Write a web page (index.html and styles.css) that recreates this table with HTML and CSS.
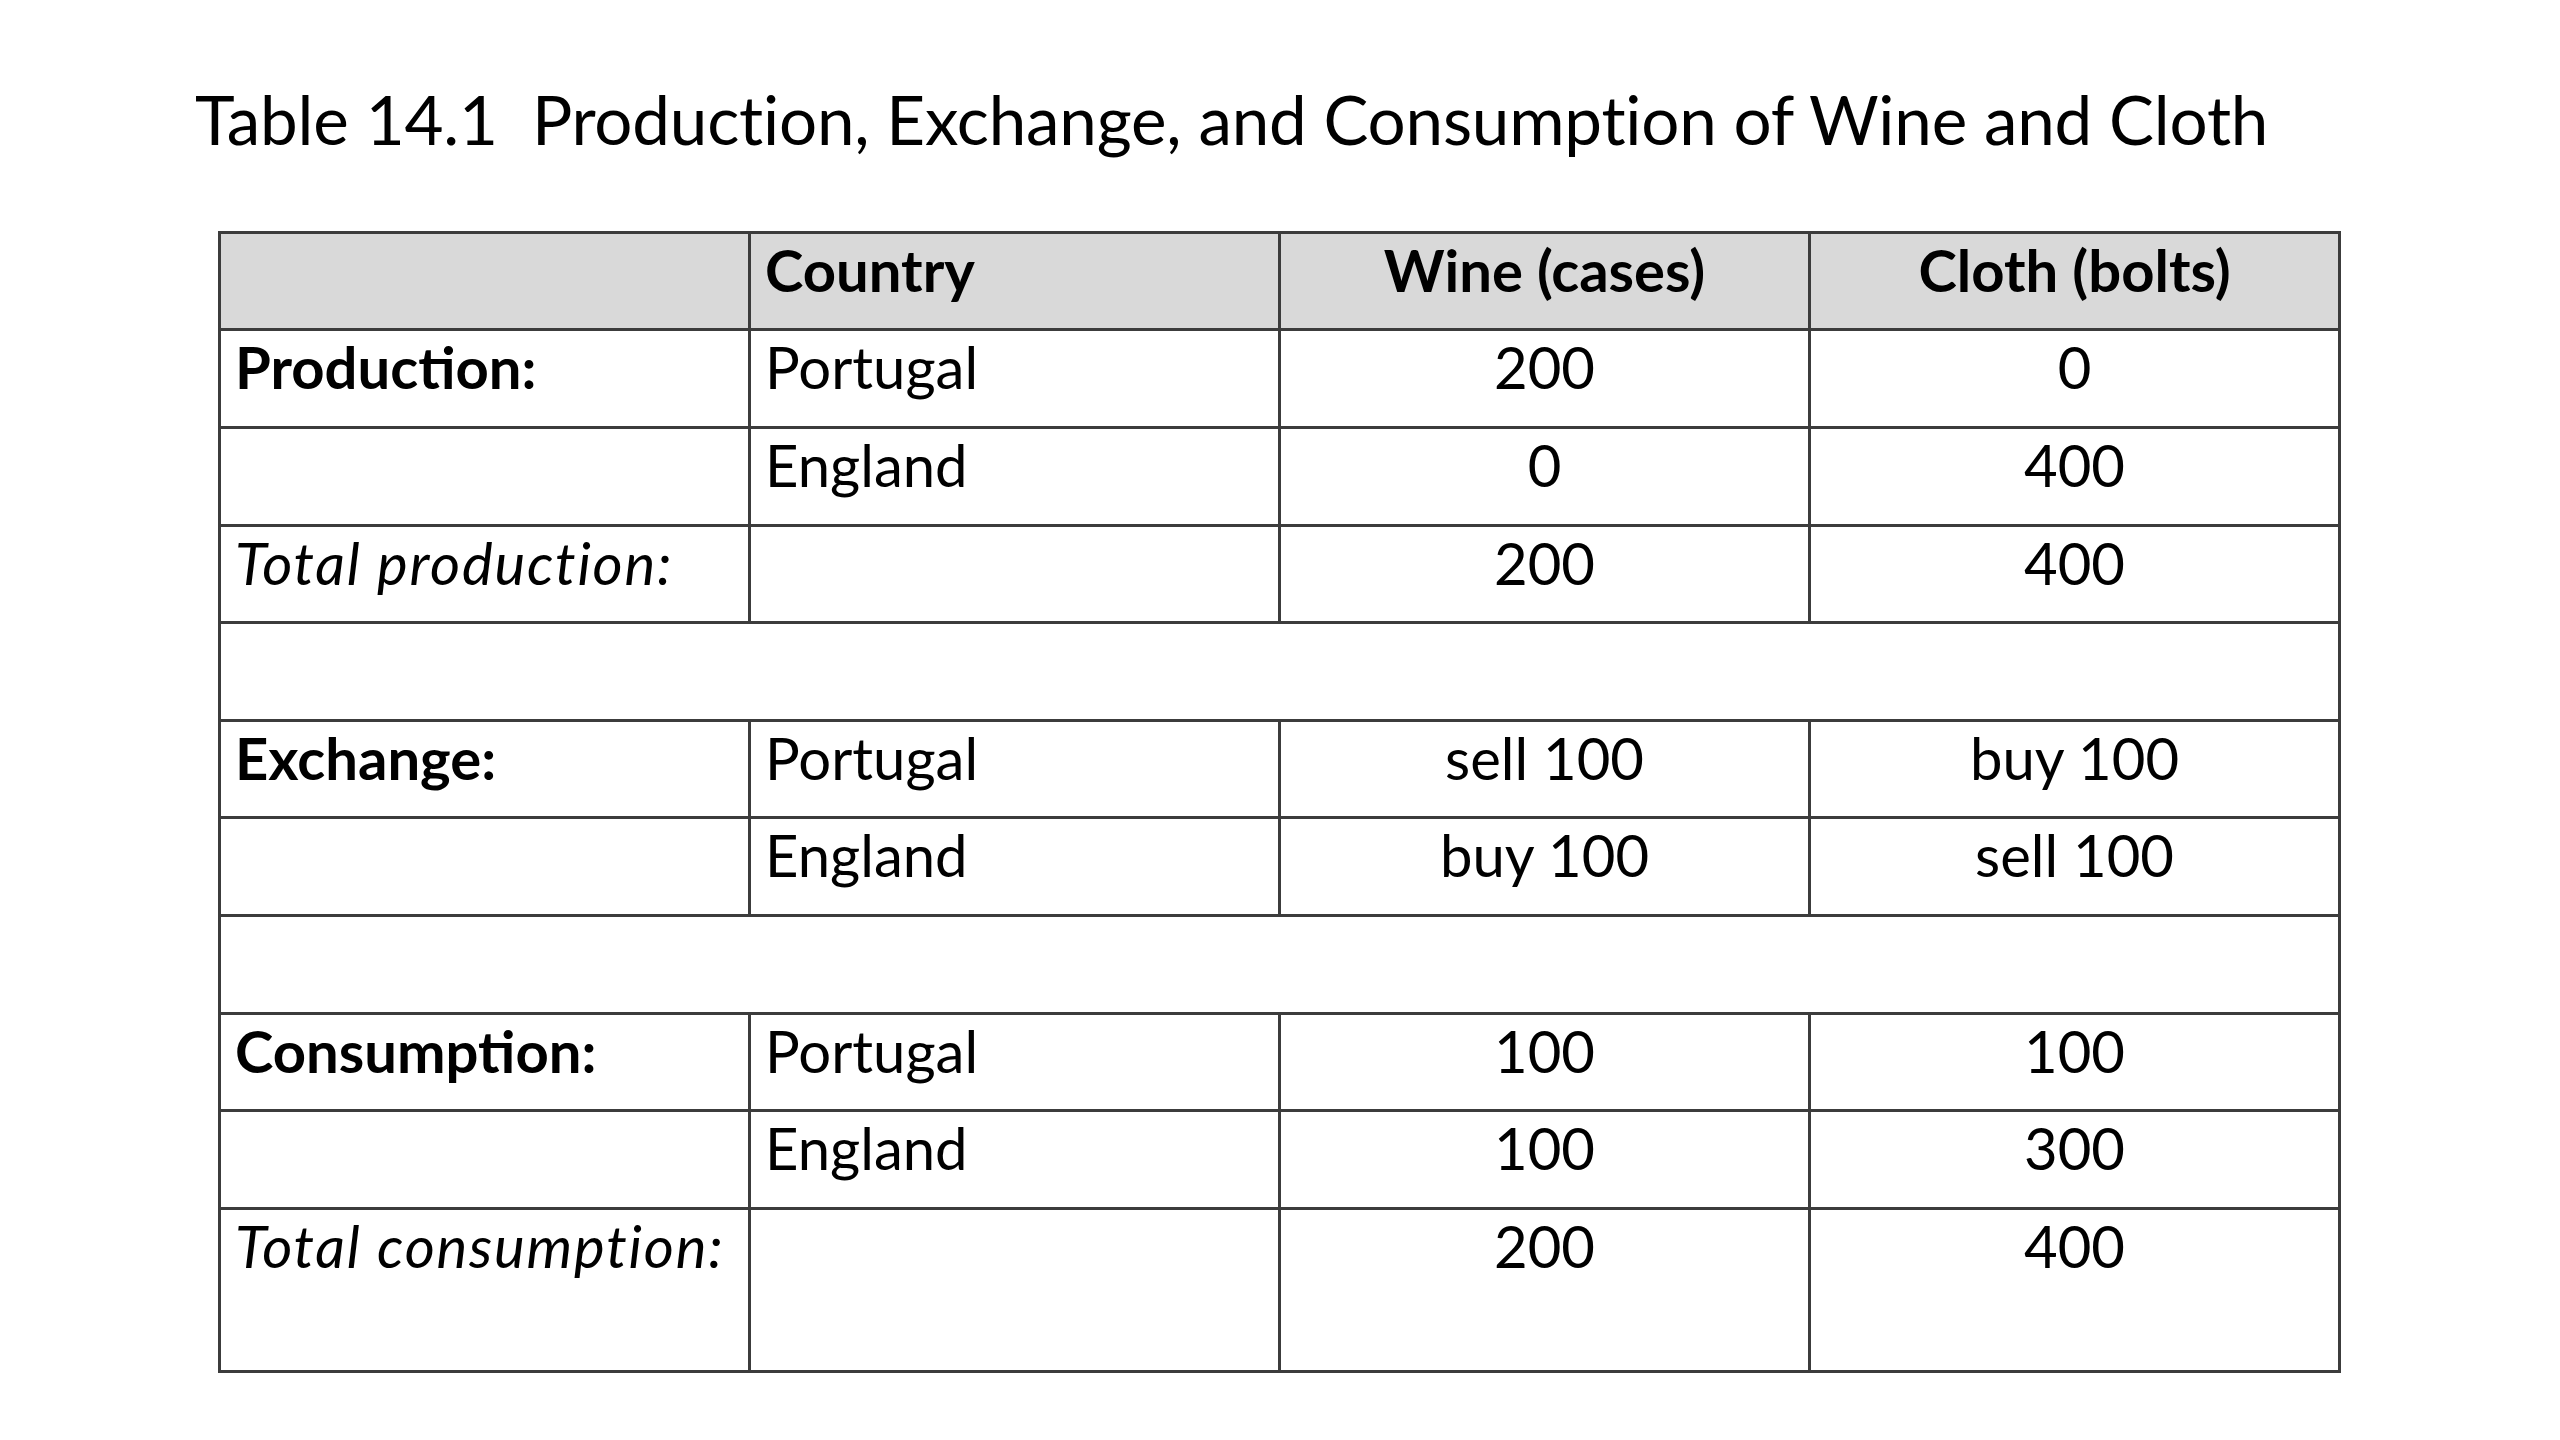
FILE: index.html
```html
<!DOCTYPE html>
<html lang="en">
<head>
<meta charset="utf-8">
<title>Table 14.1</title>
<link rel="stylesheet" href="styles.css">
</head>
<body>
<div class="page">
  <h1 class="title">Table 14.1&nbsp; Production, Exchange, and Consumption of Wine and Cloth</h1>
  <table class="data">
    <colgroup>
      <col class="c"><col class="c"><col class="c"><col class="c">
    </colgroup>
    <thead>
      <tr class="row head">
        <th class="lbl"></th>
        <th class="lbl">Country</th>
        <th class="num">Wine (cases)</th>
        <th class="num">Cloth (bolts)</th>
      </tr>
    </thead>
    <tbody>
      <tr class="row">
        <td class="lbl sect">Production:</td>
        <td class="lbl">Portugal</td>
        <td class="num">200</td>
        <td class="num">0</td>
      </tr>
      <tr class="row">
        <td class="lbl"></td>
        <td class="lbl">England</td>
        <td class="num">0</td>
        <td class="num">400</td>
      </tr>
      <tr class="row">
        <td class="lbl total">Total production:</td>
        <td class="lbl"></td>
        <td class="num">200</td>
        <td class="num">400</td>
      </tr>
      <tr class="row"><td class="blank" colspan="4"></td></tr>
      <tr class="row">
        <td class="lbl sect">Exchange:</td>
        <td class="lbl">Portugal</td>
        <td class="num">sell 100</td>
        <td class="num">buy 100</td>
      </tr>
      <tr class="row">
        <td class="lbl"></td>
        <td class="lbl">England</td>
        <td class="num">buy 100</td>
        <td class="num">sell 100</td>
      </tr>
      <tr class="row"><td class="blank" colspan="4"></td></tr>
      <tr class="row">
        <td class="lbl sect">Consumption:</td>
        <td class="lbl">Portugal</td>
        <td class="num">100</td>
        <td class="num">100</td>
      </tr>
      <tr class="row">
        <td class="lbl"></td>
        <td class="lbl">England</td>
        <td class="num">100</td>
        <td class="num">300</td>
      </tr>
      <tr class="row last">
        <td class="lbl total">Total consumption:</td>
        <td class="lbl"></td>
        <td class="num">200</td>
        <td class="num">400</td>
      </tr>
    </tbody>
  </table>
</div>
</body>
</html>
```

FILE: styles.css
```css
html, body {
  margin: 0;
  padding: 0;
  background: #ffffff;
}

body {
  font-family: Lato, "Liberation Sans", sans-serif;
  color: #000000;
  width: 2560px;
  height: 1440px;
  overflow: hidden;
}

.page {
  display: flex;
  flex-direction: column;
  padding: 79px 0 0 195px;
}

.title {
  margin: 0;
  font-weight: 400;
  font-size: 67.3px;
  line-height: 1.2;
  white-space: nowrap;
  letter-spacing: -0.2px;
}

.data {
  margin: 71px 0 0 23px;
  border-collapse: collapse;
  table-layout: fixed;
  width: 2123px;
  border: 3px solid #3c3c3c;
}

.c {
  width: 25%;
}

.data th,
.data td {
  border: 3px solid #3c3c3c;
  font-size: 58px;
  line-height: 1.2;
  padding: 1px 14px 0 14px;
  vertical-align: top;
  white-space: nowrap;
}

.data th {
  font-weight: 700;
}

.head th {
  background: #d9d9d9;
}

.row {
  height: 97.6px;
}

.row.last {
  height: 163px;
}

.lbl {
  text-align: left;
}

.num {
  text-align: center;
}

.sect {
  font-weight: 700;
}

.total {
  font-style: italic;
  letter-spacing: 1.8px;
}
```
